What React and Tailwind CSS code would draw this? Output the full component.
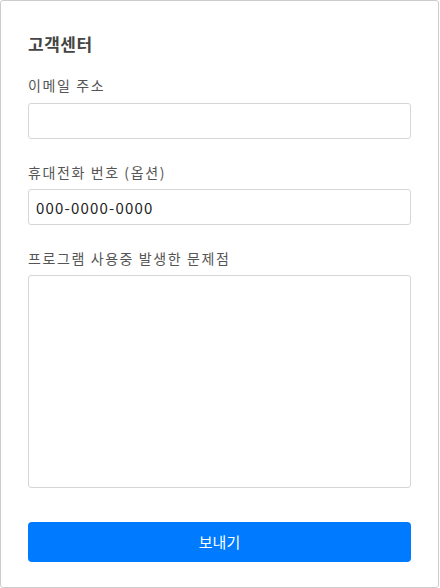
export default function App() {
  return (
    <div className="w-[440px] h-[588px] bg-white font-['Noto_Sans_CJK_KR','Noto_Sans',sans-serif]">
      <div className="w-[439px] h-[588px] border border-[#cccccc] rounded-[3px] px-[27px] pt-[30px] flex flex-col">
        <h1 className="text-[17px] leading-[26px] font-bold text-[#444444] tracking-[0.5px]">고객센터</h1>

        <label className="mt-[18px] text-[14px] leading-[20px] text-[#555555] tracking-[1.6px]">이메일 주소</label>
        <input
          type="text"
          className="mt-[8px] h-[36px] w-full border border-[#d6d6d6] rounded-[3px] px-[8px] outline-none"
        />

        <label className="mt-[23px] text-[14px] leading-[20px] text-[#555555] tracking-[1.6px]">휴대전화 번호 (옵션)</label>
        <input
          type="text"
          defaultValue="000-0000-0000"
          className="mt-[7px] h-[36px] w-full border border-[#d6d6d6] rounded-[3px] px-[7px] text-[15px] text-[#222222] tracking-[1.2px] outline-none"
        />

        <label className="mt-[23px] text-[14px] leading-[20px] text-[#555555] tracking-[1.6px]">프로그램 사용중 발생한 문제점</label>
        <textarea className="mt-[7px] h-[213px] w-full border border-[#d6d6d6] rounded-[3px] p-[8px] resize-none outline-none" />

        <button className="mt-[34px] h-[40px] w-full bg-[#007bff] text-white rounded-[4px] text-[15px]">
          보내기
        </button>
      </div>
    </div>
  );
}
